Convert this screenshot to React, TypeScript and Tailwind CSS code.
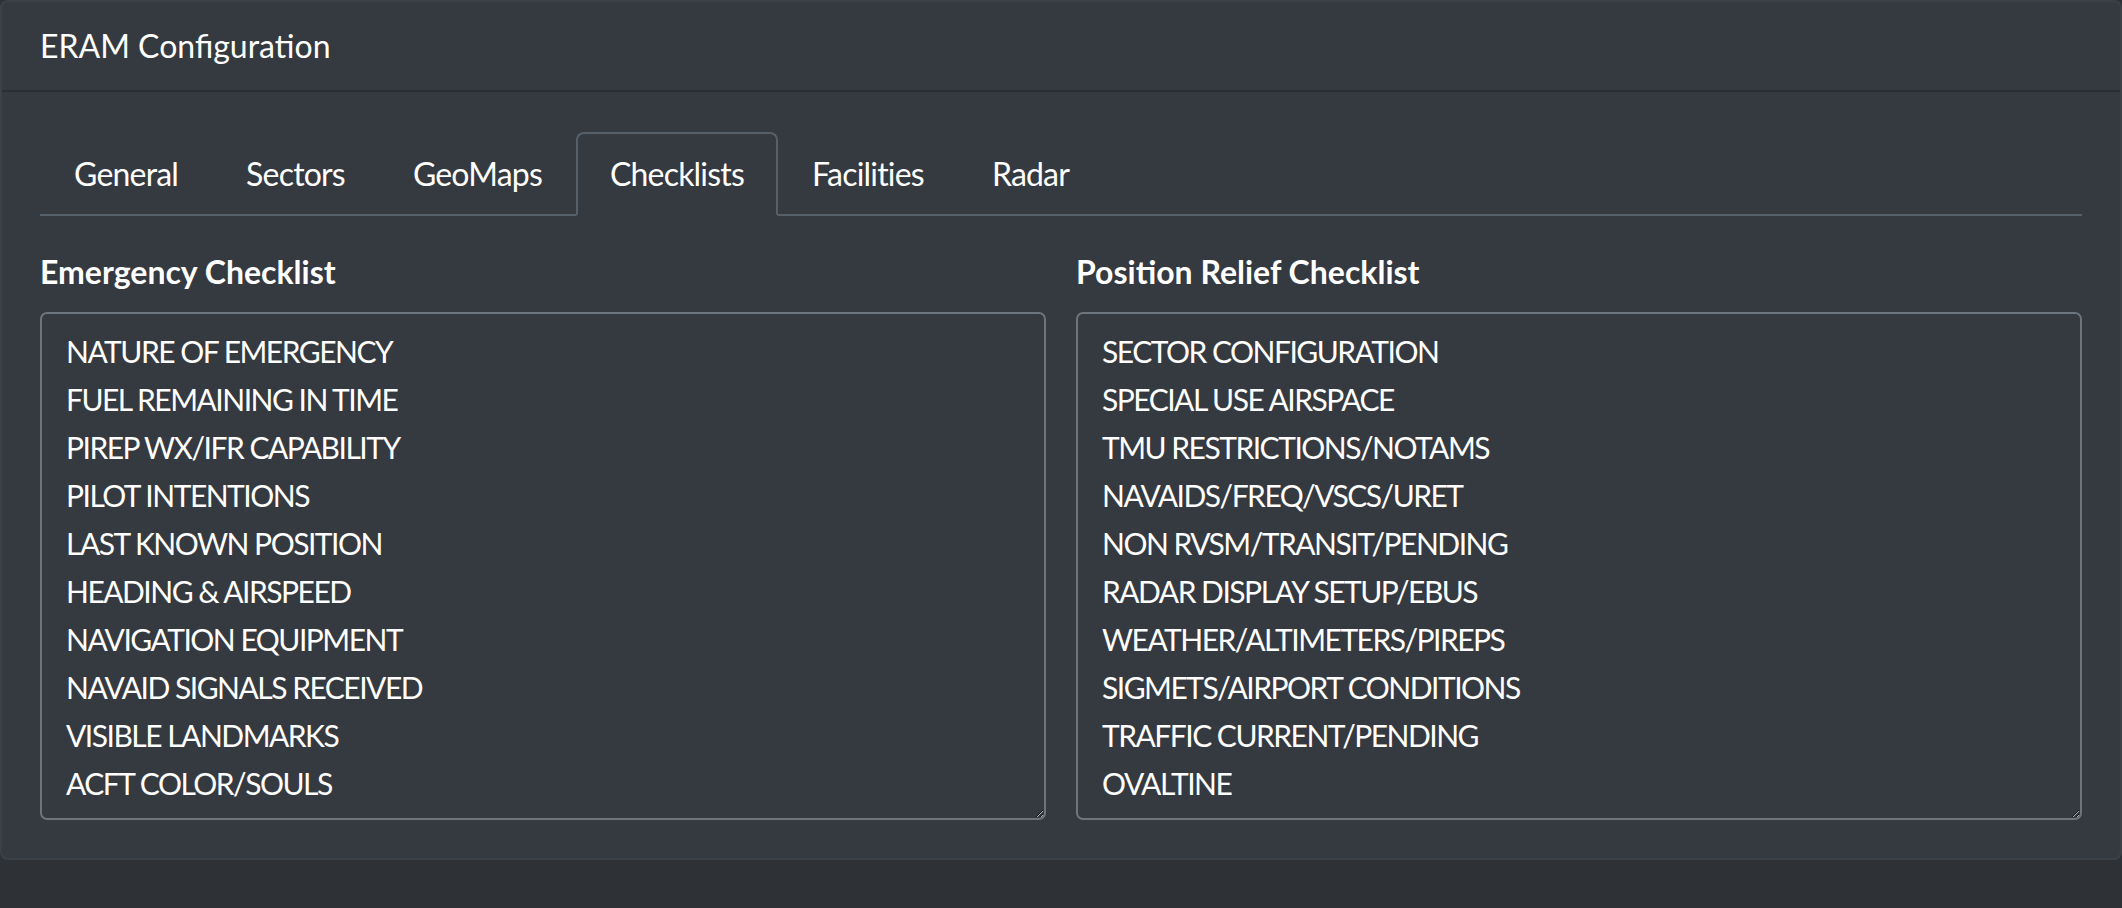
import React from "react";

const emergency = [
  "NATURE OF EMERGENCY",
  "FUEL REMAINING IN TIME",
  "PIREP WX/IFR CAPABILITY",
  "PILOT INTENTIONS",
  "LAST KNOWN POSITION",
  "HEADING & AIRSPEED",
  "NAVIGATION EQUIPMENT",
  "NAVAID SIGNALS RECEIVED",
  "VISIBLE LANDMARKS",
  "ACFT COLOR/SOULS",
];

const relief = [
  "SECTOR CONFIGURATION",
  "SPECIAL USE AIRSPACE",
  "TMU RESTRICTIONS/NOTAMS",
  "NAVAIDS/FREQ/VSCS/URET",
  "NON RVSM/TRANSIT/PENDING",
  "RADAR DISPLAY SETUP/EBUS",
  "WEATHER/ALTIMETERS/PIREPS",
  "SIGMETS/AIRPORT CONDITIONS",
  "TRAFFIC CURRENT/PENDING",
  "OVALTINE",
];

const tabs = ["General", "Sectors", "GeoMaps", "Checklists", "Facilities", "Radar"];

function Checklist({ title, items }: { title: string; items: string[] }) {
  return (
    <div className="flex flex-col">
      <label className="font-bold text-[32px] leading-[48px] mb-[16px] text-white">{title}</label>
      <textarea
        readOnly
        defaultValue={items.join("\n")}
        className="h-[508px] w-full bg-[#353940] border-2 border-[#6c747d] rounded-[7px] px-[24px] pt-[13px] pb-[11px] text-[30px] leading-[48px] tracking-[-1.5px] text-white font-['Lato',sans-serif] outline-none resize-y"
      />
    </div>
  );
}

export default function App() {
  return (
    <div className="w-[2122px] h-[908px] bg-[#2e3236] font-['Lato',sans-serif] text-white">
      <div className="bg-[#353940] border-2 border-[#3c4148] rounded-[8px]">
        <div className="h-[90px] flex items-center px-[38px] border-b-2 border-[#2a2e33]">
          <span className="text-[32px] leading-[48px]">ERAM Configuration</span>
        </div>
        <div className="px-[38px] pt-[40px] pb-[38px]">
          <div className="flex border-b-2 border-[#56606b]">
            {tabs.map((t) => {
              const active = t === "Checklists";
              return (
                <div
                  key={t}
                  className={
                    active
                      ? "-mb-[2px] px-[32px] py-[16px] text-[32px] leading-[48px] tracking-[-0.8px] border-2 border-[#56606b] border-b-[#353940] rounded-t-[8px] bg-[#353940]"
                      : "-mb-[2px] px-[32px] py-[16px] text-[32px] leading-[48px] tracking-[-0.8px] border-2 border-transparent"
                  }
                >
                  {t}
                </div>
              );
            })}
          </div>
          <div className="mt-[32px] grid grid-cols-2 gap-x-[30px]">
            <Checklist title="Emergency Checklist" items={emergency} />
            <Checklist title="Position Relief Checklist" items={relief} />
          </div>
        </div>
      </div>
    </div>
  );
}
